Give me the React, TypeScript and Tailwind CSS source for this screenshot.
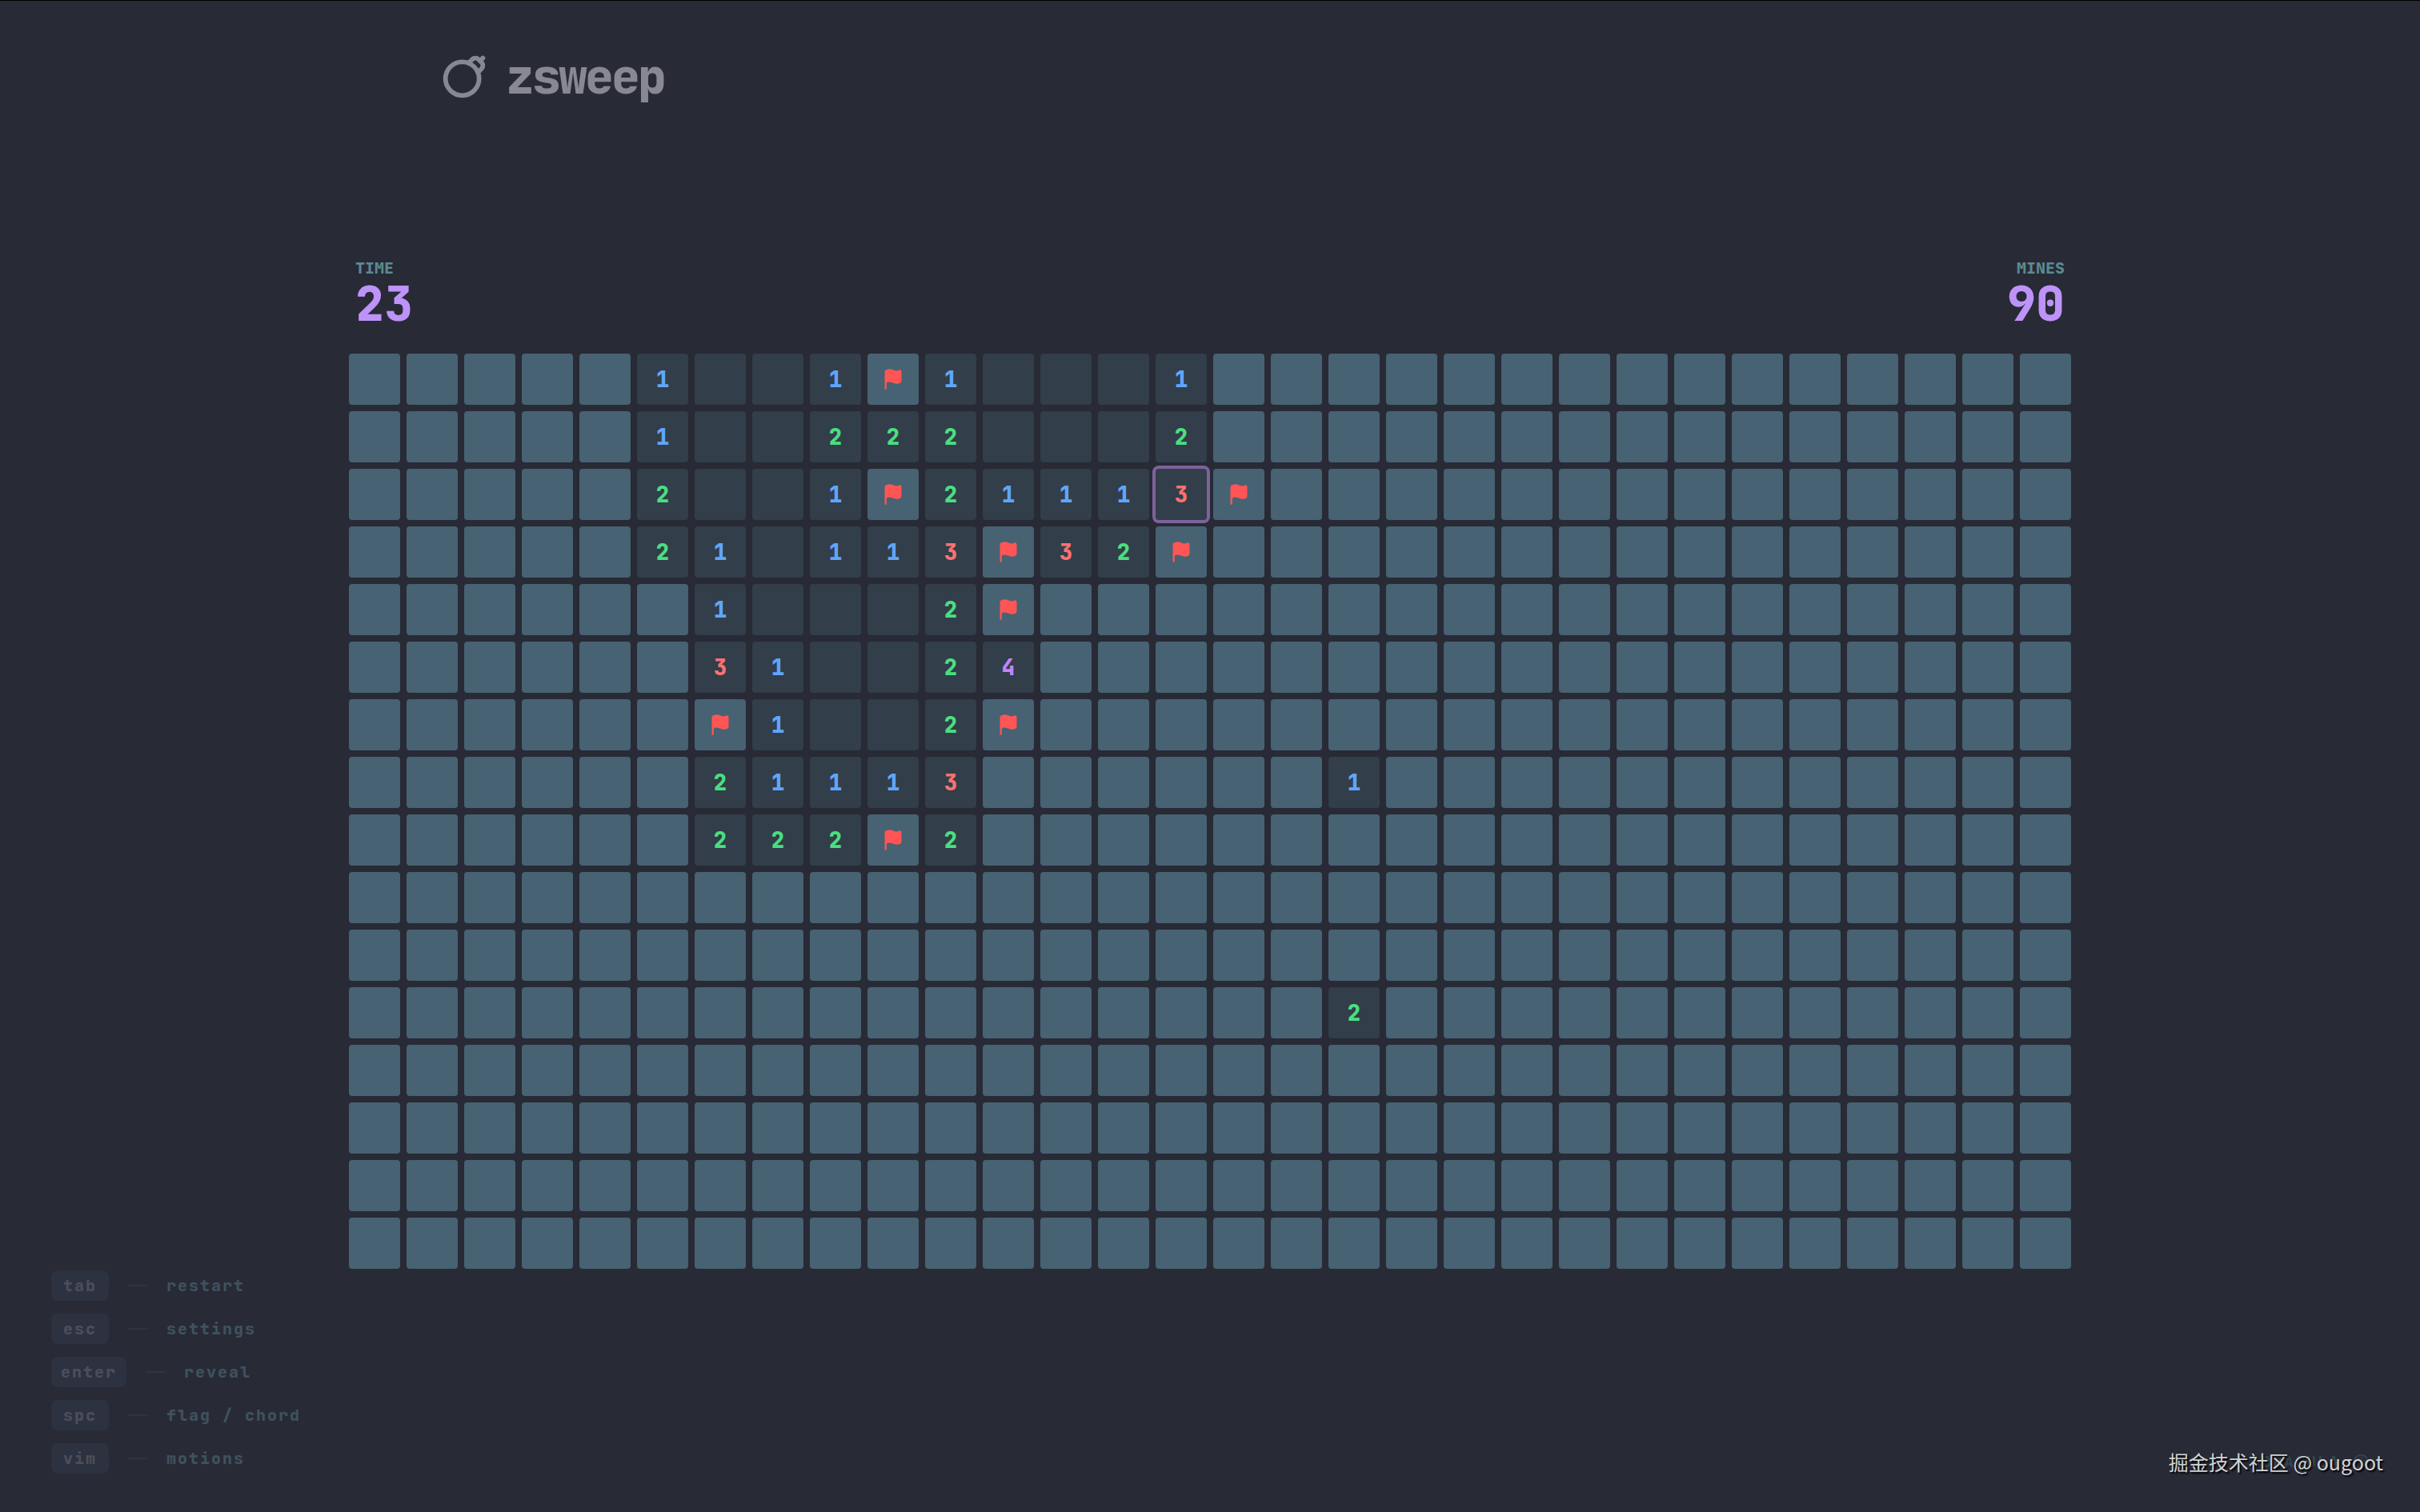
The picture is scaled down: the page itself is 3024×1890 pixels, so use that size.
import { Bomb, Flag, Palette } from "lucide-react";
import clsx from "clsx";

// "#" closed, "F" flagged, "." opened and empty, digits are neighbour counts
const board = [
  "#####1..1F1...1###############",
  "#####1..222...2###############",
  "#####2..1F21113F##############",
  "#####21.113F32F###############",
  "######1...2F##################",
  "######31..24##################",
  "######F1..2F##################",
  "######21113######1############",
  "######222F2###################",
  "##############################",
  "##############################",
  "#################2############",
  "##############################",
  "##############################",
  "##############################",
  "##############################",
];

const cursor = { row: 2, col: 14 };

const numberColors: Record<string, string> = {
  "1": "text-[#60a5fa]",
  "2": "text-[#4ade80]",
  "3": "text-[#f87171]",
  "4": "text-[#c084fc]",
};

const shortcuts = [
  { key: "tab", action: "restart" },
  { key: "esc", action: "settings" },
  { key: "enter", action: "reveal" },
  { key: "spc", action: "flag / chord" },
  { key: "vim", action: "motions" },
];

function Header() {
  return (
    <header className="mx-auto w-full max-w-[2048px] px-16 pt-[59px]">
      <a href="#" className="inline-flex items-center gap-6 text-[#878891]">
        <Bomb size={56} strokeWidth={2.5} />
        <h1 className="text-[60px] leading-[72px] font-extrabold tracking-tighter">
          zsweep
        </h1>
      </a>
    </header>
  );
}

interface StatProps {
  label: string;
  value: number;
  alignRight?: boolean;
}

function Stat({ label, value, alignRight = false }: StatProps) {
  return (
    <div
      className={clsx("flex flex-col font-extrabold", alignRight && "items-end")}
    >
      <span className="text-[20px] leading-[26px] text-[#5b8991]">{label}</span>
      <span className="text-[60px] leading-[64px] text-[#bd93f9]">{value}</span>
    </div>
  );
}

interface CellProps {
  value: string;
  row: number;
  col: number;
}

function Cell({ value, row, col }: CellProps) {
  const closed = value === "#" || value === "F";
  const active = row === cursor.row && col === cursor.col;

  return (
    <button
      aria-label={`Row ${row + 1}, column ${col + 1}`}
      className={clsx(
        "flex size-16 items-center justify-center rounded text-[28px] leading-[40px] font-extrabold",
        closed ? "bg-[#476272]" : "bg-[#323e49]",
        active && "ring-4 ring-[#7d629c]",
        numberColors[value],
      )}
    >
      {value === "F" && (
        <Flag size={28} fill="currentColor" className="text-[#ff5555]" />
      )}
      {numberColors[value] && value}
    </button>
  );
}

function Shortcuts() {
  return (
    <ul className="flex flex-col gap-4 text-[20px] leading-[30px] font-extrabold tracking-widest">
      {shortcuts.map((item) => (
        <li key={item.key} className="flex items-center gap-6">
          <kbd className="min-w-[72px] rounded-lg bg-[#2d3240] px-3 py-1 text-center font-[inherit] text-[#4c4e5a]">
            {item.key}
          </kbd>
          <span className="h-0.5 w-6 bg-[#313440]" />
          <span className="text-[#3e525d]">{item.action}</span>
        </li>
      ))}
    </ul>
  );
}

export default function App() {
  return (
    <div className="flex min-h-screen flex-col border-t border-black bg-[#282a36] font-['JetBrains_Mono','DejaVu_Sans_Mono',monospace]">
      <Header />

      <main className="mx-auto mt-[190px]">
        <div className="flex justify-between px-2 pb-[30px]">
          <Stat label="TIME" value={23} />
          <Stat label="MINES" value={90} alignRight />
        </div>
        <div className="grid grid-cols-[repeat(30,64px)] gap-2">
          {board.map((line, row) =>
            line
              .split("")
              .map((value, col) => (
                <Cell key={`${row}-${col}`} value={value} row={row} col={col} />
              )),
          )}
        </div>
      </main>

      <footer className="relative mt-auto flex items-end justify-between px-16 pb-12">
        <Shortcuts />
        <button className="flex items-center gap-4 text-[20px] leading-[30px] font-bold tracking-widest text-[#34464f]">
          DRACULA
          <Palette size={20} />
        </button>
        {/* Watermark over the theme button */}
        <p className="absolute right-[46px] bottom-[45px] font-['Noto_Sans_CJK_SC',sans-serif] text-[25px] leading-[36px] text-[#d2d2d5] [text-shadow:2px_2px_2px_#000000]">
          掘金技术社区 @ ougoot
        </p>
      </footer>
    </div>
  );
}
